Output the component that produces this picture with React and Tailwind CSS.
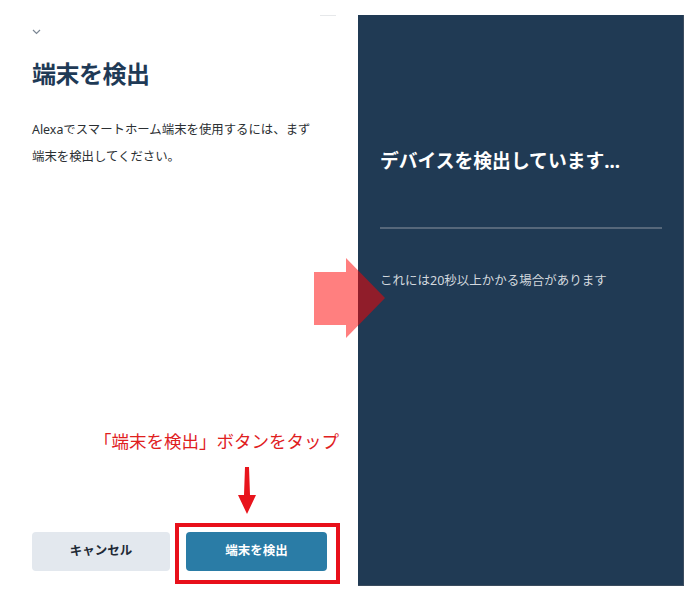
import React from 'react';

const font = { fontFamily: '"Noto Sans", "Noto Sans CJK JP", sans-serif' };

function Chevron() {
  return (
    <svg width="9" height="6" viewBox="0 0 9 6" className="block">
      <path d="M1 1l3.5 3.5L8 1" fill="none" stroke="#7b8794" strokeWidth="1.2" />
    </svg>
  );
}

function BigArrow() {
  return (
    <svg width="71" height="80" viewBox="0 0 71 80" className="absolute left-[314px] top-[258px]">
      <polygon points="0,14 32,14 32,0 71,40 32,80 32,67 0,67" fill="#ff0000" fillOpacity="0.5" />
    </svg>
  );
}

function DownArrow() {
  return (
    <svg width="20" height="48" viewBox="0 0 20 48" className="block">
      <polygon points="8,0 12,0 13,28 19,28 10,47 1,28 7,28" fill="#e8141c" />
    </svg>
  );
}

function LeftPanel() {
  return (
    <div className="relative w-[358px] h-[602px] bg-white pl-[32px] flex flex-col">
      <div className="absolute left-[320px] top-[15px] w-[16px] h-px bg-[#e6e8ea]" />
      <div className="pt-[29px]">
        <Chevron />
      </div>
      <h1 className="mt-[23px] text-[24px] leading-[32px] font-bold text-[#1f3a56] tracking-[-0.5px]">
        端末を検出
      </h1>
      <p className="mt-[26px] text-[12.4px] leading-[27px] text-[#2b2f33] whitespace-nowrap">
        Alexaでスマートホーム端末を使用するには、まず
        <br />
        端末を検出してください。
      </p>
      <div className="mt-auto">
        <div className="ml-[62px] text-[17.5px] leading-[20px] text-[#e0201e] whitespace-nowrap">
          「端末を検出」ボタンをタップ
        </div>
        <div className="ml-[205px] mt-[16px]">
          <DownArrow />
        </div>
        <div className="flex gap-[16px] mt-[17px] mb-[31px]">
          <button className="w-[138px] h-[39px] rounded-[4px] bg-[#e3e8ee] text-[12.5px] font-bold text-[#1f2a36]">
            キャンセル
          </button>
          <button className="w-[141px] h-[39px] rounded-[4px] bg-[#2a7ca6] text-[12.5px] font-bold text-white">
            端末を検出
          </button>
        </div>
      </div>
      <div className="absolute left-[175px] top-[523px] w-[165px] h-[61px] border-[4px] border-[#e8101a]" />
    </div>
  );
}

function RightPanel() {
  return (
    <div className="mt-[15px] w-[326px] h-[571px] bg-[#203a54] pl-[22px] pr-[21px] flex flex-col border-r border-b border-[#3b4c5e]">
      <div className="mt-[133px] text-[18.8px] leading-[26px] font-bold text-white whitespace-nowrap">
        デバイスを検出しています...
      </div>
      <div className="mt-[53px] h-[2px] bg-[#56677a]" />
      <div className="mt-[43px] text-[12.5px] leading-[18px] text-[#d3d9df] whitespace-nowrap">
        これには20秒以上かかる場合があります
      </div>
    </div>
  );
}

export default function App() {
  return (
    <div className="relative w-[700px] h-[602px] bg-white flex overflow-hidden" style={font}>
      <LeftPanel />
      <RightPanel />
      <BigArrow />
    </div>
  );
}
